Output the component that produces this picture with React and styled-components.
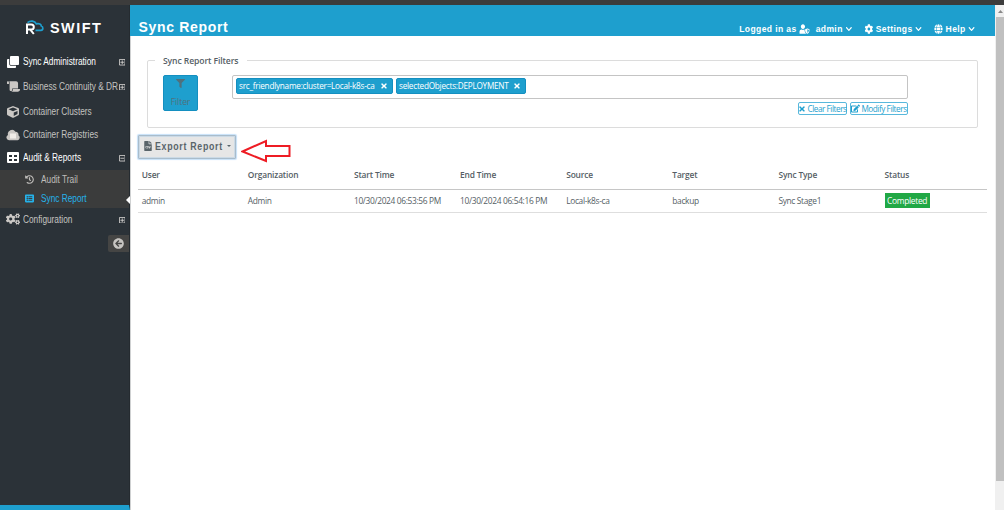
import React from "react";
import styled, { createGlobalStyle } from "styled-components";
import {
  FaClone, FaScroll, FaCube, FaHistory, FaListAlt, FaCogs,
  FaArrowCircleLeft, FaUserShield, FaCog, FaGlobe, FaChevronDown, FaFilter,
  FaTimes, FaEdit, FaFileCsv,
} from "react-icons/fa";

const Global = createGlobalStyle`
  * { box-sizing: border-box; }
  body { margin: 0; background: #fff; overflow: hidden; }
  svg { display: block; flex: none; }
`;

const Shell = styled.div`
  width: 1004px;
  height: 510px;
  display: grid;
  grid-template: 5px 505px / 130px 1fr 9px;
  font-family: "Open Sans", sans-serif;
  color: #555e65;
  white-space: nowrap;
`;
const TopStrip = styled.div`
  grid-column: 1 / -1;
  background: #3c3c3c;
`;
const Sidebar = styled.nav`
  position: relative;
  display: flex;
  flex-direction: column;
  background: #2b3238;
  border-right: 1px solid #252b30;
  border-bottom: 5px solid #1e9fce;
  font-family: "Liberation Sans", Arial, sans-serif;
`;
const Brand = styled.div`
  height: 45px;
  display: flex;
  align-items: center;
  padding: 0 0 0 25px;
  color: #fff;
  font-size: 15.5px;
  font-weight: 700;
  letter-spacing: 1.6px;
`;
const BrandMark = styled.svg`
  width: 21px;
  height: 18px;
  margin-right: 4px;
`;
const BrandName = styled.span`
  transform: scaleX(0.93);
  transform-origin: left;
`;
const NavRow = styled.div`
  height: ${(p) => p.$h}px;
  display: flex;
  align-items: center;
  color: ${(p) => (p.$bright ? "#fff" : "#c4c3c0")};
  font-size: 10px;
`;
const NavLabel = styled.span`
  flex: 1 1 0;
  min-width: 0;
  transform: scaleX(0.83);
  transform-origin: left;
`;
const NavIcon = styled.span`
  flex: none;
  width: 23px;
  display: flex;
  justify-content: center;
  padding-left: 3px;
  color: ${(p) => (p.$bright ? "#fff" : "#cbc8c5")};
`;
const Toggle = styled.span`
  flex: none;
  padding: 2px 4px 0 0;
  color: #d8d6d4;
`;
const SubMenu = styled.div`
  position: relative;
  height: 38px;
  background: #3b3c3c;
`;
const SubRow = styled.div`
  height: 19px;
  display: flex;
  align-items: center;
  gap: 7px;
  padding: 0 0 1px 25px;
  color: ${(p) => (p.$active ? "#25b2ea" : "#bfbdba")};
  font-size: 10px;
`;
const ActiveNotch = styled.span`
  position: absolute;
  right: -1px;
  bottom: 4px;
  border: solid transparent;
  border-width: 4px 4px 4px 0;
  border-right-color: #fff;
`;
const Collapse = styled.button`
  align-self: flex-end;
  width: 21px;
  height: 17px;
  margin-top: 5px;
  padding: 0;
  border: 0;
  border-radius: 2px 0 0 2px;
  background: #454544;
  color: #c7c5c2;
  display: flex;
  align-items: center;
  justify-content: center;
`;

const Main = styled.main`
  border-left: 1px solid #cfd1d2;
  min-width: 0;
`;
const Header = styled.header`
  height: 31px;
  margin-left: -1px;
  padding: 13px 20px 0 8.5px;
  display: flex;
  justify-content: space-between;
  background: #1e9fce;
  color: #fff;
  font-family: "Liberation Sans", Arial, sans-serif;
  font-weight: 700;
`;
const Title = styled.h1`
  margin: 0;
  font-size: 14px;
  line-height: 18px;
  letter-spacing: 0.67px;
`;
const HeaderMenu = styled.div`
  display: flex;
  align-items: center;
  height: 21px;
  font-size: 9.8px;
  letter-spacing: 0.45px;
  transform: scaleX(0.87);
  transform-origin: right;
`;
const MenuItem = styled.span`
  display: flex;
  align-items: center;
  gap: 3px;
  margin-left: ${(p) => p.$ml ?? 0}px;
`;
const Content = styled.div`
  padding: 24px 8px 0 7px;
`;
const FilterPanel = styled.section`
  height: 68px;
  margin: 0 9px;
  padding: 0 69px 0 15px;
  border: 1px solid #dcdcdc;
  border-radius: 2px;
`;
const Legend = styled.div`
  width: 92px;
  height: 14px;
  margin: -8px 0 0 -8px;
  padding-left: 8px;
  background: #fff;
  font-size: 8.6px;
  font-weight: 600;
  line-height: 16px;
  letter-spacing: -0.1px;
`;
const FilterBody = styled.div`
  display: flex;
  gap: 34px;
  margin-top: 8px;
`;
const FilterButton = styled.button`
  width: 35px;
  height: 36px;
  padding: 3px 0 0;
  border: 1px solid #148fc0;
  border-radius: 2px;
  background: #1e9fce;
  color: #50707c;
  display: flex;
  flex-direction: column;
  align-items: center;
  gap: 7px;
  font: 8.6px/14px "Open Sans", sans-serif;
  letter-spacing: -0.1px;
`;
const FilterFields = styled.div`
  flex: 1;
`;
const TagBox = styled.div`
  height: 24px;
  padding: 2px 3px;
  display: flex;
  gap: 3px;
  border: 1px solid #c4c4c4;
  border-radius: 2px;
`;
const Tag = styled.span`
  width: ${(p) => p.$w}px;
  height: 16px;
  padding: 0 4px 1px 2px;
  display: flex;
  align-items: center;
  justify-content: space-between;
  border: 1px solid #148fc0;
  border-radius: 2px;
  background: #1e9fce;
  color: #fff;
  font-size: 8.2px;
  letter-spacing: -0.24px;
`;
const FilterActions = styled.div`
  display: flex;
  justify-content: flex-end;
  gap: 3px;
  margin-top: 3px;
`;
const OutlineButton = styled.button`
  width: ${(p) => p.$w}px;
  height: 13px;
  padding: 0;
  display: flex;
  align-items: center;
  justify-content: center;
  gap: 1px;
  border: 1px solid #58b8dc;
  border-radius: 2px;
  background: #fff;
  color: #1e9fce;
  font: 8.2px/11px "Open Sans", sans-serif;
  letter-spacing: -0.45px;
  white-space: nowrap;
`;
const ExportRow = styled.div`
  display: flex;
  align-items: flex-start;
  height: 27px;
  margin-top: 7px;
`;
const ExportButton = styled.button`
  width: 98px;
  height: 24px;
  padding: 0 0 2px 4px;
  display: flex;
  align-items: center;
  border: 1px solid #a9bccb;
  border-radius: 1px;
  box-shadow: inset 0 0 0 1px #cbdae6, 0 0 1px 1px #c6e0f8;
  background: #e6e6e6;
  color: #59646a;
  font: 700 10px "Liberation Sans", Arial, sans-serif;
  letter-spacing: 0.8px;
  white-space: nowrap;
`;
const ExportLabel = styled.span`
  width: 68px;
  margin: 0 4px 0 2px;
  text-align: left;
  transform: scaleX(0.88);
  transform-origin: left;
  display: flex;
`;
const PointerArrow = styled.svg`
  margin: 3px 0 0 5px;
`;
const Table = styled.table`
  width: 849px;
  table-layout: fixed;
  border-collapse: collapse;
  font-size: 8.4px;
  letter-spacing: -0.34px;
`;
const Th = styled.th`
  height: 27px;
  padding: 0 4px 1px 3.7px;
  text-align: left;
  font-weight: 600;
  letter-spacing: -0.15px;
  border-bottom: 1px solid #c6c6c6;
`;
const Td = styled.td`
  height: 23px;
  padding: 0 4px 0 3.7px;
  border-bottom: 1px solid #dedede;
`;
const Badge = styled.span`
  display: block;
  width: 45px;
  height: 15px;
  background: #21a845;
  color: #fff;
  line-height: 15px;
  text-align: center;
  letter-spacing: -0.28px;
`;
const ScrollTrack = styled.div`
  background: #f0f0f0;
  padding-left: 1px;
`;
const ScrollArrow = styled.div`
  height: 12px;
  display: flex;
  align-items: center;
  justify-content: center;
`;
const ScrollThumb = styled.div`
  height: 464px;
  background: #c0c0c0;
`;

const ScrollUp = () => (
  <ScrollArrow><svg width="5" height="3"><path d="M0 3 2.5 0 5 3z" fill="#888" /></svg></ScrollArrow>
);

const CloudLines = () => (
  <svg width="14" height="12" viewBox="0 0 14 12">
    <path d="M3 11.300A2.800 2.800 0 0 1 2 6a4.100 4.100 0 0 1 7.400-3.300 2.800 2.800 0 0 1 3 3.500 2.800 2.800 0 0 1-.8 5.100z" fill="#cbc8c5" />
    <path d="M4 4.500h6v5H4z" fill="#f0ece8" />
  </svg>
);

const TableGlyph = () => (
  <svg width="12" height="11" viewBox="0 0 12 11">
    <rect width="12" height="11" rx="1" fill="#fff" />
    <path d="M2 3h3v2H2zM7 3h3v2H7zM2 7h3v2H2zM7 7h3v2H7z" fill="#2b3238" />
  </svg>
);

const ExpandGlyph = ({ open }) => (
  <svg width="6.5" height="6.5" viewBox="0 0 7 7" fill="none" stroke="currentColor">
    <path d="M.5.5h6v6h-6z" strokeWidth="0.9" />
    <path d={open ? "M1.500 3.500h4" : "M1.500 3.500h4M3.500 1.500v4"} strokeWidth="0.9" />
  </svg>
);

const headings = ["User", "Organization", "Start Time", "End Time", "Source", "Target", "Sync Type", "Status"];
const record = ["admin", "Admin", "10/30/2024 06:53:56 PM", "10/30/2024 06:54:16 PM", "Local-k8s-ca", "backup", "Sync Stage1"];

function Entry({ icon, label, h, bright, toggle }) {
  return (
    <NavRow $h={h} $bright={bright}>
      <NavIcon $bright={bright}>{icon}</NavIcon>
      <NavLabel>{label}</NavLabel>
      {toggle && <Toggle><ExpandGlyph open={toggle === "open"} /></Toggle>}
    </NavRow>
  );
}

export default function App() {
  return (
    <Shell>
      <Global />
      <TopStrip />
      <Sidebar>
        <Brand>
          <BrandMark viewBox="0 0 21 18">
            <path d="M2 15V5.600h4.300a2.300 2.300 0 0 1 0 5H2M5.500 10.800 8.800 15" fill="none" stroke="#fff" strokeWidth="2" />
            <path d="M2.500 3.600C5.500 1.200 9.800 1.600 11.300 4.800c3-.7 4.800.4 5 2.200 2.200.7 2 4.300-.3 4.300h-5.500" fill="none" stroke="#1e9fce" strokeWidth="1.700" />
          </BrandMark>
          <BrandName>SWIFT</BrandName>
        </Brand>
        <Entry h={23} bright icon={<FaClone size={12} />} label="Sync Administration" toggle="closed" />
        <Entry h={26} icon={<FaScroll size={13} />} label="Business Continuity & DR" toggle="closed" />
        <Entry h={25} icon={<FaCube size={12} />} label="Container Clusters" />
        <Entry h={21} icon={<CloudLines />} label="Container Registries" />
        <Entry h={25} bright icon={<TableGlyph />} label="Audit & Reports" toggle="open" />
        <SubMenu>
          <SubRow><FaHistory size={9} /><NavLabel>Audit Trail</NavLabel></SubRow>
          <SubRow $active><FaListAlt size={9} /><NavLabel>Sync Report</NavLabel></SubRow>
          <ActiveNotch />
        </SubMenu>
        <Entry h={22} icon={<FaCogs size={14} />} label="Configuration" toggle="closed" />
        <Collapse><FaArrowCircleLeft size={11} /></Collapse>
      </Sidebar>
      <Main>
        <Header>
          <Title>Sync Report</Title>
          <HeaderMenu>
            <MenuItem>Logged in as<FaUserShield size={12} /></MenuItem>
            <MenuItem $ml={7}>admin<FaChevronDown size={8} /></MenuItem>
            <MenuItem $ml={14}><FaCog size={10} />Settings<FaChevronDown size={8} /></MenuItem>
            <MenuItem $ml={14}><FaGlobe size={10} />Help<FaChevronDown size={8} /></MenuItem>
          </HeaderMenu>
        </Header>
        <Content>
          <FilterPanel>
            <Legend>Sync Report Filters</Legend>
            <FilterBody>
              <FilterButton><FaFilter size={9} />Filter</FilterButton>
              <FilterFields>
                <TagBox>
                  <Tag $w={157}>src_friendlyname:cluster=Local-k8s-ca<FaTimes size={8} /></Tag>
                  <Tag $w={130}>selectedObjects:DEPLOYMENT<FaTimes size={8} /></Tag>
                </TagBox>
                <FilterActions>
                  <OutlineButton $w={49}><FaTimes size={8} />Clear Filters</OutlineButton>
                  <OutlineButton $w={58}><FaEdit size={9} />Modify Filters</OutlineButton>
                </FilterActions>
              </FilterFields>
            </FilterBody>
          </FilterPanel>
          <ExportRow>
            <ExportButton>
              <FaFileCsv size={10} />
              <ExportLabel>Export Report</ExportLabel>
              <svg width="4" height="2"><path d="M0 0h4L2 2z" fill="#59646a" /></svg>
            </ExportButton>
            <PointerArrow width="51" height="26" viewBox="0 0 51 26">
              <path d="M1.500 13.500 25 3v5h23.500v10H25v5z" fill="#fff" stroke="#ee1c24" strokeWidth="2" />
            </PointerArrow>
          </ExportRow>
          <Table>
            <thead><tr>{headings.map((h) => <Th key={h}>{h}</Th>)}</tr></thead>
            <tbody>
              <tr>
                {record.map((v) => <Td key={v}>{v}</Td>)}
                <Td><Badge>Completed</Badge></Td>
              </tr>
            </tbody>
          </Table>
        </Content>
      </Main>
      <ScrollTrack>
        <ScrollUp />
        <ScrollThumb />
      </ScrollTrack>
    </Shell>
  );
}
